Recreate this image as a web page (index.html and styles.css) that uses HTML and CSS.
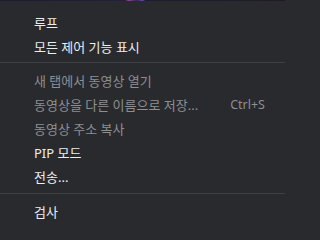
FILE: index.html
```html
<!DOCTYPE html>
<html lang="ko">
<head>
<meta charset="utf-8">
<link rel="stylesheet" href="styles.css">
</head>
<body>
<div class="strip"></div>
<div class="menu">
  <div class="item">루프</div>
  <div class="item">모든 제어 기능 표시</div>
  <div class="sep sep-a"></div>
  <div class="item disabled">새 탭에서 동영상 열기</div>
  <div class="item disabled"><span>동영상을 다른 이름으로 저장...</span><span class="key">Ctrl+S</span></div>
  <div class="item disabled">동영상 주소 복사</div>
  <div class="item">PIP 모드</div>
  <div class="item">전송...</div>
  <div class="sep"></div>
  <div class="item">검사</div>
</div>
</body>
</html>
```

FILE: styles.css
```css
html, body {
  margin: 0;
  padding: 0;
  background: #292a2d;
  width: 285px;
  height: 227px;
  overflow: hidden;
}
.strip {
  height: 1px;
  background: linear-gradient(90deg, #221736 0%, #2a1a44 44%, #b02fb0 45%, #3a1f5e 48%, #6a3ae0 50%, #241838 51%, #1f1b26 100%);
}
.menu {
  padding-top: 9px;
  font-family: "Noto Sans", "Noto Sans CJK KR", sans-serif;
  font-size: 13px;
  color: #eceef0;
}
.item {
  height: 24px;
  display: flex;
  align-items: center;
  justify-content: space-between;
  padding: 0 20px 0 34px;
  white-space: nowrap;
}
.disabled {
  color: #8d8f93;
}
.key {
  font-family: "Noto Sans", sans-serif;
  font-size: 12.5px;
}
.sep {
  height: 1px;
  background: #3f4043;
  margin: 5px 0;
}
.sep-a {
  margin-top: 4px;
}
```
